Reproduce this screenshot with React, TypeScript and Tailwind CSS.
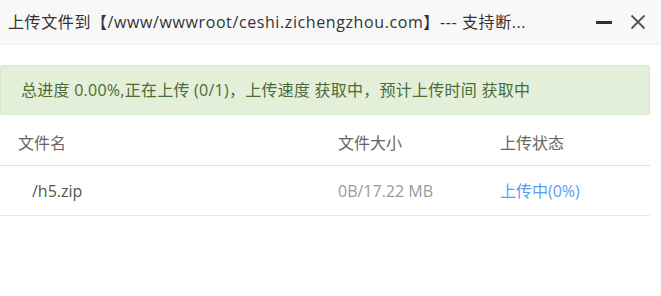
import React from "react";

export default function App() {
  const font = { fontFamily: '"Open Sans", "Noto Sans CJK SC", sans-serif' };
  return (
    <div className="w-[661px] h-[296px] bg-white overflow-hidden" style={font}>
      <div className="h-[45px] bg-[#f8f8f8] border-b border-[#eeeeee] flex items-center pl-[8px] pr-[15px]">
        <div className="flex-1 text-[16px] text-[#333333] whitespace-nowrap overflow-hidden tracking-[0.6px]">
          上传文件到【/www/wwwroot/ceshi.zichengzhou.com】--- 支持断...
        </div>
        <div className="flex items-center gap-[18px]">
          <div className="w-[16px] h-[3px] bg-[#2e2d3a]" />
          <svg width="16" height="16" viewBox="0 0 16 16">
            <path d="M1.5 1.5 L14.5 14.5 M14.5 1.5 L1.5 14.5" stroke="#555555" strokeWidth="1.8" fill="none" />
          </svg>
        </div>
      </div>
      <div className="pr-[11px] pt-[20px]">
        <div className="h-[50px] bg-[#e3efd9] border border-[#d6e9c6] rounded-[2px] flex items-center pl-[20px] text-[16px] text-[#4d6b35] tracking-[0.25px]">
          总进度 0.00%,正在上传 (0/1)，上传速度 获取中，预计上传时间 获取中
        </div>
        <div className="mt-[6px]">
          <div className="h-[45px] border-b border-[#e0e0e0] flex items-center text-[16px] text-[#666666]">
            <div className="w-[338px] pl-[18px]">文件名</div>
            <div className="w-[162px]">文件大小</div>
            <div>上传状态</div>
          </div>
          <div className="h-[50px] border-b border-[#e6e6e6] flex items-center text-[16px]">
            <div className="w-[338px] pl-[32px] text-[#555555]">/h5.zip</div>
            <div className="w-[162px] text-[#999999]">0B/17.22 MB</div>
            <div className="text-[#5b9cf5]">上传中(0%)</div>
          </div>
        </div>
      </div>
    </div>
  );
}
